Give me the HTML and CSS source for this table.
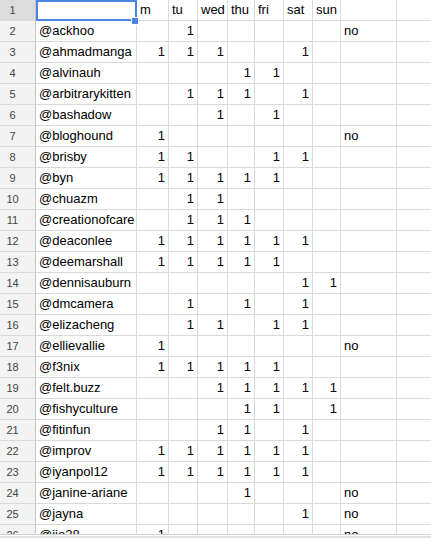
FILE: index.html
```html
<!DOCTYPE html>
<html>
<head>
<meta charset="utf-8">
<link rel="stylesheet" href="styles.css">
</head>
<body>
<div class="page">
<div class="viewport">
<div class="sheet" id="sheet">
<div class="rh sel">1</div><div class="c t a1"><span class="selbox"><span class="handle"></span></span></div><div class="c t">m</div><div class="c t">tu</div><div class="c t">wed</div><div class="c t">thu</div><div class="c t">fri</div><div class="c t">sat</div><div class="c t">sun</div><div class="c t"></div><div class="c t"></div>
<div class="rh">2</div><div class="c t">@ackhoo</div><div class="c n"></div><div class="c n">1</div><div class="c n"></div><div class="c n"></div><div class="c n"></div><div class="c n"></div><div class="c n"></div><div class="c t">no</div><div class="c t"></div>
<div class="rh">3</div><div class="c t">@ahmadmanga</div><div class="c n">1</div><div class="c n">1</div><div class="c n">1</div><div class="c n"></div><div class="c n"></div><div class="c n">1</div><div class="c n"></div><div class="c t"></div><div class="c t"></div>
<div class="rh">4</div><div class="c t">@alvinauh</div><div class="c n"></div><div class="c n"></div><div class="c n"></div><div class="c n">1</div><div class="c n">1</div><div class="c n"></div><div class="c n"></div><div class="c t"></div><div class="c t"></div>
<div class="rh">5</div><div class="c t">@arbitrarykitten</div><div class="c n"></div><div class="c n">1</div><div class="c n">1</div><div class="c n">1</div><div class="c n"></div><div class="c n">1</div><div class="c n"></div><div class="c t"></div><div class="c t"></div>
<div class="rh">6</div><div class="c t">@bashadow</div><div class="c n"></div><div class="c n"></div><div class="c n">1</div><div class="c n"></div><div class="c n">1</div><div class="c n"></div><div class="c n"></div><div class="c t"></div><div class="c t"></div>
<div class="rh">7</div><div class="c t">@bloghound</div><div class="c n">1</div><div class="c n"></div><div class="c n"></div><div class="c n"></div><div class="c n"></div><div class="c n"></div><div class="c n"></div><div class="c t">no</div><div class="c t"></div>
<div class="rh">8</div><div class="c t">@brisby</div><div class="c n">1</div><div class="c n">1</div><div class="c n"></div><div class="c n"></div><div class="c n">1</div><div class="c n">1</div><div class="c n"></div><div class="c t"></div><div class="c t"></div>
<div class="rh">9</div><div class="c t">@byn</div><div class="c n">1</div><div class="c n">1</div><div class="c n">1</div><div class="c n">1</div><div class="c n">1</div><div class="c n"></div><div class="c n"></div><div class="c t"></div><div class="c t"></div>
<div class="rh">10</div><div class="c t">@chuazm</div><div class="c n"></div><div class="c n">1</div><div class="c n">1</div><div class="c n"></div><div class="c n"></div><div class="c n"></div><div class="c n"></div><div class="c t"></div><div class="c t"></div>
<div class="rh">11</div><div class="c t">@creationofcare</div><div class="c n"></div><div class="c n">1</div><div class="c n">1</div><div class="c n">1</div><div class="c n"></div><div class="c n"></div><div class="c n"></div><div class="c t"></div><div class="c t"></div>
<div class="rh">12</div><div class="c t">@deaconlee</div><div class="c n">1</div><div class="c n">1</div><div class="c n">1</div><div class="c n">1</div><div class="c n">1</div><div class="c n">1</div><div class="c n"></div><div class="c t"></div><div class="c t"></div>
<div class="rh">13</div><div class="c t">@deemarshall</div><div class="c n">1</div><div class="c n">1</div><div class="c n">1</div><div class="c n">1</div><div class="c n">1</div><div class="c n"></div><div class="c n"></div><div class="c t"></div><div class="c t"></div>
<div class="rh">14</div><div class="c t">@dennisauburn</div><div class="c n"></div><div class="c n"></div><div class="c n"></div><div class="c n"></div><div class="c n"></div><div class="c n">1</div><div class="c n">1</div><div class="c t"></div><div class="c t"></div>
<div class="rh">15</div><div class="c t">@dmcamera</div><div class="c n"></div><div class="c n">1</div><div class="c n"></div><div class="c n">1</div><div class="c n"></div><div class="c n">1</div><div class="c n"></div><div class="c t"></div><div class="c t"></div>
<div class="rh">16</div><div class="c t">@elizacheng</div><div class="c n"></div><div class="c n">1</div><div class="c n">1</div><div class="c n"></div><div class="c n">1</div><div class="c n">1</div><div class="c n"></div><div class="c t"></div><div class="c t"></div>
<div class="rh">17</div><div class="c t">@ellievallie</div><div class="c n">1</div><div class="c n"></div><div class="c n"></div><div class="c n"></div><div class="c n"></div><div class="c n"></div><div class="c n"></div><div class="c t">no</div><div class="c t"></div>
<div class="rh">18</div><div class="c t">@f3nix</div><div class="c n">1</div><div class="c n">1</div><div class="c n">1</div><div class="c n">1</div><div class="c n">1</div><div class="c n"></div><div class="c n"></div><div class="c t"></div><div class="c t"></div>
<div class="rh">19</div><div class="c t">@felt.buzz</div><div class="c n"></div><div class="c n"></div><div class="c n">1</div><div class="c n">1</div><div class="c n">1</div><div class="c n">1</div><div class="c n">1</div><div class="c t"></div><div class="c t"></div>
<div class="rh">20</div><div class="c t">@fishyculture</div><div class="c n"></div><div class="c n"></div><div class="c n"></div><div class="c n">1</div><div class="c n">1</div><div class="c n"></div><div class="c n">1</div><div class="c t"></div><div class="c t"></div>
<div class="rh">21</div><div class="c t">@fitinfun</div><div class="c n"></div><div class="c n"></div><div class="c n">1</div><div class="c n">1</div><div class="c n"></div><div class="c n">1</div><div class="c n"></div><div class="c t"></div><div class="c t"></div>
<div class="rh">22</div><div class="c t">@improv</div><div class="c n">1</div><div class="c n">1</div><div class="c n">1</div><div class="c n">1</div><div class="c n">1</div><div class="c n">1</div><div class="c n"></div><div class="c t"></div><div class="c t"></div>
<div class="rh">23</div><div class="c t">@iyanpol12</div><div class="c n">1</div><div class="c n">1</div><div class="c n">1</div><div class="c n">1</div><div class="c n">1</div><div class="c n">1</div><div class="c n"></div><div class="c t"></div><div class="c t"></div>
<div class="rh">24</div><div class="c t">@janine-ariane</div><div class="c n"></div><div class="c n"></div><div class="c n"></div><div class="c n">1</div><div class="c n"></div><div class="c n"></div><div class="c n"></div><div class="c t">no</div><div class="c t"></div>
<div class="rh">25</div><div class="c t">@jayna</div><div class="c n"></div><div class="c n"></div><div class="c n"></div><div class="c n"></div><div class="c n"></div><div class="c n">1</div><div class="c n"></div><div class="c t">no</div><div class="c t"></div>
<div class="rh">26</div><div class="c t">@jio28</div><div class="c n">1</div><div class="c n"></div><div class="c n"></div><div class="c n"></div><div class="c n"></div><div class="c n"></div><div class="c n"></div><div class="c t">no</div><div class="c t"></div>
</div>
</div>
<div class="scrollbar"><div class="track"></div></div>
</div>
</body>
</html>
```

FILE: styles.css
```css
html, body {
  margin: 0;
  padding: 0;
  background: #ffffff;
}

.page {
  width: 431px;
  height: 538px;
  overflow: hidden;
  display: flex;
  flex-direction: column;
}

.viewport {
  height: 534px;
  overflow: hidden;
  flex: none;
}

.sheet {
  display: grid;
  grid-template-columns: 36px 101px 32px 29px 30px 27px 29px 29px 28px 56px 60px;
  grid-auto-rows: 21px;
  font-family: "Liberation Sans", Arial, sans-serif;
  font-size: 13px;
  color: #000000;
}

.rh,
.c {
  box-sizing: border-box;
  border-right: 1px solid #dadada;
  border-bottom: 1px solid #dadada;
  line-height: 20px;
  white-space: nowrap;
  overflow: hidden;
}

.rh {
  background: #f3f3f3;
  border-right-color: #c4c4c4;
  border-bottom-color: #dadada;
  text-align: center;
  font-size: 11px;
  color: #444444;
  padding-right: 10px;
}

.rh.sel {
  background: #dcdcdc;
}

.c {
  padding: 0 3px;
}

.c.t {
  text-align: left;
}

.c.n {
  text-align: right;
}

.a1 {
  position: relative;
  overflow: visible;
  z-index: 2;
}

.selbox {
  position: absolute;
  top: 0;
  left: 0;
  right: -1px;
  bottom: -1px;
  border: 2px solid #4a86e8;
  box-sizing: border-box;
}

.handle {
  position: absolute;
  left: 93px;
  top: 15px;
  width: 6px;
  height: 6px;
  background: #4a86e8;
  border: 1px solid #ffffff;
  box-sizing: content-box;
}

.scrollbar {
  flex: none;
  height: 4px;
  box-sizing: border-box;
  border-top: 1px solid #d0d0d0;
  padding-top: 1px;
  background: #ffffff;
}

.track {
  height: 2px;
  background: #e2e2e2;
}
```
